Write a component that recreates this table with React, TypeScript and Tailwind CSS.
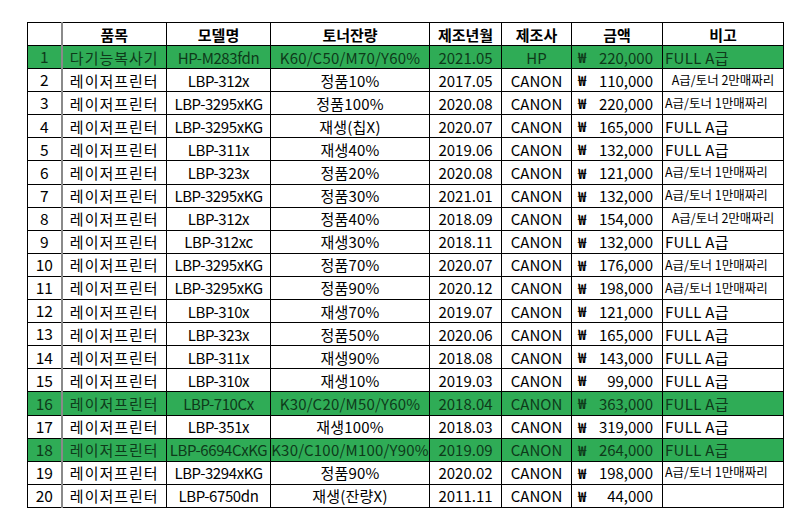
import React from "react";

type Row = {
  n: number;
  item: string;
  model: string;
  toner: string;
  date: string;
  maker: string;
  price: string;
  note: string;
  noteType: "full" | "left" | "center" | "none";
  green?: boolean;
};

const rows: Row[] = [
  { n: 1, item: "다기능복사기", model: "HP-M283fdn", toner: "K60/C50/M70/Y60%", date: "2021.05", maker: "HP", price: "220,000", note: "FULL A급", noteType: "full", green: true },
  { n: 2, item: "레이저프린터", model: "LBP-312x", toner: "정품10%", date: "2017.05", maker: "CANON", price: "110,000", note: "A급/토너 2만매짜리", noteType: "center" },
  { n: 3, item: "레이저프린터", model: "LBP-3295xKG", toner: "정품100%", date: "2020.08", maker: "CANON", price: "220,000", note: "A급/토너 1만매짜리", noteType: "left" },
  { n: 4, item: "레이저프린터", model: "LBP-3295xKG", toner: "재생(칩X)", date: "2020.07", maker: "CANON", price: "165,000", note: "FULL A급", noteType: "full" },
  { n: 5, item: "레이저프린터", model: "LBP-311x", toner: "재생40%", date: "2019.06", maker: "CANON", price: "132,000", note: "FULL A급", noteType: "full" },
  { n: 6, item: "레이저프린터", model: "LBP-323x", toner: "정품20%", date: "2020.08", maker: "CANON", price: "121,000", note: "A급/토너 1만매짜리", noteType: "left" },
  { n: 7, item: "레이저프린터", model: "LBP-3295xKG", toner: "정품30%", date: "2021.01", maker: "CANON", price: "132,000", note: "A급/토너 1만매짜리", noteType: "left" },
  { n: 8, item: "레이저프린터", model: "LBP-312x", toner: "정품40%", date: "2018.09", maker: "CANON", price: "154,000", note: "A급/토너 2만매짜리", noteType: "center" },
  { n: 9, item: "레이저프린터", model: "LBP-312xc", toner: "재생30%", date: "2018.11", maker: "CANON", price: "132,000", note: "FULL A급", noteType: "full" },
  { n: 10, item: "레이저프린터", model: "LBP-3295xKG", toner: "정품70%", date: "2020.07", maker: "CANON", price: "176,000", note: "A급/토너 1만매짜리", noteType: "left" },
  { n: 11, item: "레이저프린터", model: "LBP-3295xKG", toner: "정품90%", date: "2020.12", maker: "CANON", price: "198,000", note: "A급/토너 1만매짜리", noteType: "left" },
  { n: 12, item: "레이저프린터", model: "LBP-310x", toner: "재생70%", date: "2019.07", maker: "CANON", price: "121,000", note: "FULL A급", noteType: "full" },
  { n: 13, item: "레이저프린터", model: "LBP-323x", toner: "정품50%", date: "2020.06", maker: "CANON", price: "165,000", note: "FULL A급", noteType: "full" },
  { n: 14, item: "레이저프린터", model: "LBP-311x", toner: "재생90%", date: "2018.08", maker: "CANON", price: "143,000", note: "FULL A급", noteType: "full" },
  { n: 15, item: "레이저프린터", model: "LBP-310x", toner: "재생10%", date: "2019.03", maker: "CANON", price: "99,000", note: "FULL A급", noteType: "full" },
  { n: 16, item: "레이저프린터", model: "LBP-710Cx", toner: "K30/C20/M50/Y60%", date: "2018.04", maker: "CANON", price: "363,000", note: "FULL A급", noteType: "full", green: true },
  { n: 17, item: "레이저프린터", model: "LBP-351x", toner: "재생100%", date: "2018.03", maker: "CANON", price: "319,000", note: "FULL A급", noteType: "full" },
  { n: 18, item: "레이저프린터", model: "LBP-6694CxKG", toner: "K30/C100/M100/Y90%", date: "2019.09", maker: "CANON", price: "264,000", note: "FULL A급", noteType: "full", green: true },
  { n: 19, item: "레이저프린터", model: "LBP-3294xKG", toner: "정품90%", date: "2020.02", maker: "CANON", price: "198,000", note: "A급/토너 1만매짜리", noteType: "left" },
  { n: 20, item: "레이저프린터", model: "LBP-6750dn", toner: "재생(잔량X)", date: "2011.11", maker: "CANON", price: "44,000", note: "", noteType: "none" },
];

const cell = "border border-black px-0 py-0 whitespace-nowrap overflow-hidden leading-none";

export default function App() {
  return (
    <div
      className="w-[800px] h-[523px] bg-white pt-[22px] pl-[27px] text-black"
      style={{ fontFamily: '"Noto Sans CJK KR", "Noto Sans", sans-serif' }}
    >
      <table className="table-fixed border-collapse w-[756px] text-[15px]">
        <colgroup>
          <col className="w-[34px]" />
          <col className="w-[105px]" />
          <col className="w-[104px]" />
          <col className="w-[159px]" />
          <col className="w-[72px]" />
          <col className="w-[70px]" />
          <col className="w-[91px]" />
          <col className="w-[121px]" />
        </colgroup>
        <thead>
          <tr className="h-[23px] font-bold">
            <th className={`${cell} border-r-2 border-r-[#8a8a8a]`}></th>
            <th className={`${cell} text-center`}>품목</th>
            <th className={`${cell} text-center`}>모델명</th>
            <th className={`${cell} text-center`}>토너잔량</th>
            <th className={`${cell} text-center`}>제조년월</th>
            <th className={`${cell} text-center`}>제조사</th>
            <th className={`${cell} text-center`}>금액</th>
            <th className={`${cell} text-center`}>비고</th>
          </tr>
        </thead>
        <tbody>
          {rows.map((r) => (
            <tr
              key={r.n}
              className={`h-[23.1px] ${r.green ? "bg-[#2fac56] text-[#0e3a1a]" : "bg-white"}`}
            >
              <td className={`${cell} text-center text-[15.5px] border-r-2 border-r-[#8a8a8a]`}>{r.n}</td>
              <td className={`${cell} text-center tracking-[1px]`}>{r.item}</td>
              <td className={`${cell} text-center tracking-[-0.4px]`}>{r.model}</td>
              <td className={`${cell} text-center tracking-[0.2px]`}>{r.toner}</td>
              <td className={`${cell} text-center`}>{r.date}</td>
              <td className={`${cell} text-center`}>{r.maker}</td>
              <td className={`${cell}`}>
                <div className="flex items-center justify-between pl-[6px] pr-[9px]">
                  <span className="font-bold text-[14px]">₩</span>
                  <span>{r.price}</span>
                </div>
              </td>
              <td className={`${cell}`}>
                {r.noteType === "full" && <div className="pl-[2px] text-left tracking-[0.3px]">{r.note}</div>}
                {r.noteType === "left" && <div className="pl-[2px] text-left text-[12.5px]">{r.note}</div>}
                {r.noteType === "center" && <div className="text-center text-[12.5px]">{r.note}</div>}
              </td>
            </tr>
          ))}
        </tbody>
      </table>
    </div>
  );
}
